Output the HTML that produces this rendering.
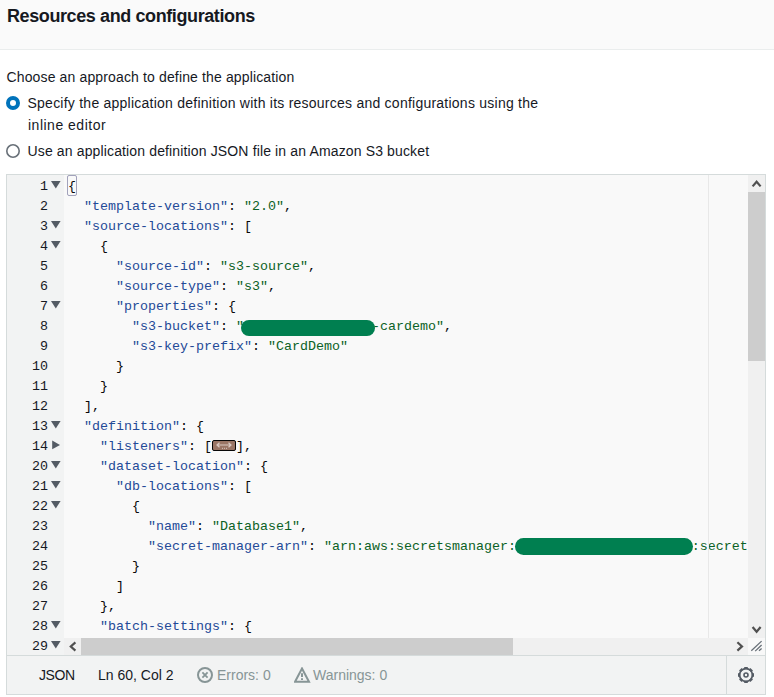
<!DOCTYPE html>
<html><head><meta charset="utf-8">
<style>
html,body{margin:0;padding:0;background:#fff;width:774px;height:697px;overflow:hidden;position:relative}
body{font-family:"Liberation Sans",sans-serif;color:#16191f}
.abs{position:absolute;white-space:nowrap}
#hdr{position:absolute;left:0;top:0;width:774px;height:49px;background:#fafafa;border-bottom:1px solid #eaeded}
#title{left:7px;top:6px;font-size:18px;line-height:20px;font-weight:bold;letter-spacing:-0.4px}
.t14{font-size:14px;line-height:20px}
.radio{position:absolute;width:14px;height:14px;border-radius:50%;box-sizing:border-box}
#r1{left:6px;top:96px;border:4px solid #0073bb;background:#fff}
#r2{left:6px;top:144px;border:2px solid #687078;background:#fff}
#ed{position:absolute;left:6px;top:174px;width:758px;height:519px;border:1px solid #d5dbdb;background:#f2f3f3;overflow:hidden}
#gut{position:absolute;left:0;top:0;width:57px;height:480px;background:#f2f3f3}
#code{position:absolute;left:57px;top:0;width:684px;height:463px;background:#f9f9f9;overflow:hidden}
.gr{position:absolute;left:0;width:57px;height:20px}
.ln{position:absolute;left:0;top:2px;width:41px;text-align:right;font-family:"Liberation Mono",monospace;font-size:13.33px;line-height:20px;color:#16191f}
.cl{position:absolute;left:4px;margin-top:2px;font-family:"Liberation Mono",monospace;font-size:13.33px;line-height:20px;color:#080808;white-space:pre}
.k{color:#234a97}.s{color:#0b6125}
.fa{position:absolute;left:44px;top:0}
#brk{position:absolute;left:3px;top:0;width:10px;height:21px;box-sizing:border-box;border:1px solid rgba(75,75,126,0.5);border-radius:2px}
.fold{display:inline-block;width:24px;height:11px;vertical-align:middle;margin-top:-2px}
.blob{position:absolute;background:#007f50;border-radius:9px}
#b1{left:177px;top:145px;width:134px;height:16px}
#b2{left:451px;top:363px;width:178px;height:17px}
#pm{position:absolute;left:644px;top:0;width:1px;height:463px;background:#e8e8e8}
#vs{position:absolute;left:741px;top:0;width:17px;height:463px;background:#f0f0f0}
#vthumb{position:absolute;left:0;top:17px;width:17px;height:169px;background:#cdcdcd}
#hs{position:absolute;left:57px;top:463px;width:684px;height:17px;background:#f0f0f0}
#hthumb{position:absolute;left:17px;top:0;width:432px;height:17px;background:#cdcdcd}
#corner{position:absolute;left:741px;top:463px;width:17px;height:17px;background:#f8f8f8}
#sb{position:absolute;left:0;top:480px;width:758px;height:39px;border-top:1px solid #d5dbdb;background:#f2f3f3;box-sizing:border-box}
.sbt{position:absolute;top:9px;font-size:14px;line-height:20px;white-space:nowrap;color:#16191f}
.gray{color:#879596}
#div{position:absolute;left:719px;top:0;width:1px;height:38px;background:#d5dbdb}
svg{display:block}
</style></head>
<body>
<div id="hdr"></div>
<div class="abs" id="title">Resources and configurations</div>
<div class="abs t14" style="left:6.5px;top:67px;letter-spacing:0.14px">Choose an approach to define the application</div>
<div class="radio" id="r1"></div>
<div class="abs t14" style="left:27.5px;top:93px;letter-spacing:0.24px">Specify the application definition with its resources and configurations using the</div>
<div class="abs t14" style="left:28px;top:115px;letter-spacing:0.5px">inline editor</div>
<svg style="position:absolute;left:6px;top:144px" width="14" height="14"><circle cx="7" cy="7" r="6.2" fill="#fff" stroke="#687078" stroke-width="1.6"/></svg>
<div class="abs t14" style="left:27.5px;top:141px;letter-spacing:0.14px">Use an application definition JSON file in an Amazon S3 bucket</div>

<div id="ed">
  <div id="gut"><div class="gr" style="top:0px"><span class="ln">1</span><svg class="fa" width="10" height="20" viewBox="0 0 10 20"><path d="M0 6 L9.6 6 L4.8 13.6 Z" fill="#545b64"/></svg></div><div class="gr" style="top:20px"><span class="ln">2</span></div><div class="gr" style="top:40px"><span class="ln">3</span><svg class="fa" width="10" height="20" viewBox="0 0 10 20"><path d="M0 6 L9.6 6 L4.8 13.6 Z" fill="#545b64"/></svg></div><div class="gr" style="top:60px"><span class="ln">4</span><svg class="fa" width="10" height="20" viewBox="0 0 10 20"><path d="M0 6 L9.6 6 L4.8 13.6 Z" fill="#545b64"/></svg></div><div class="gr" style="top:80px"><span class="ln">5</span></div><div class="gr" style="top:100px"><span class="ln">6</span></div><div class="gr" style="top:120px"><span class="ln">7</span><svg class="fa" width="10" height="20" viewBox="0 0 10 20"><path d="M0 6 L9.6 6 L4.8 13.6 Z" fill="#545b64"/></svg></div><div class="gr" style="top:140px"><span class="ln">8</span></div><div class="gr" style="top:160px"><span class="ln">9</span></div><div class="gr" style="top:180px"><span class="ln">10</span></div><div class="gr" style="top:200px"><span class="ln">11</span></div><div class="gr" style="top:220px"><span class="ln">12</span></div><div class="gr" style="top:240px"><span class="ln">13</span><svg class="fa" width="10" height="20" viewBox="0 0 10 20"><path d="M0 6 L9.6 6 L4.8 13.6 Z" fill="#545b64"/></svg></div><div class="gr" style="top:260px"><span class="ln">14</span><svg class="fa" width="10" height="20" viewBox="0 0 10 20"><path d="M1.2 5.5 L1.2 14.3 L9 9.9 Z" fill="#545b64"/></svg></div><div class="gr" style="top:280px"><span class="ln">20</span><svg class="fa" width="10" height="20" viewBox="0 0 10 20"><path d="M0 6 L9.6 6 L4.8 13.6 Z" fill="#545b64"/></svg></div><div class="gr" style="top:300px"><span class="ln">21</span><svg class="fa" width="10" height="20" viewBox="0 0 10 20"><path d="M0 6 L9.6 6 L4.8 13.6 Z" fill="#545b64"/></svg></div><div class="gr" style="top:320px"><span class="ln">22</span><svg class="fa" width="10" height="20" viewBox="0 0 10 20"><path d="M0 6 L9.6 6 L4.8 13.6 Z" fill="#545b64"/></svg></div><div class="gr" style="top:340px"><span class="ln">23</span></div><div class="gr" style="top:360px"><span class="ln">24</span></div><div class="gr" style="top:380px"><span class="ln">25</span></div><div class="gr" style="top:400px"><span class="ln">26</span></div><div class="gr" style="top:420px"><span class="ln">27</span></div><div class="gr" style="top:440px"><span class="ln">28</span><svg class="fa" width="10" height="20" viewBox="0 0 10 20"><path d="M0 6 L9.6 6 L4.8 13.6 Z" fill="#545b64"/></svg></div><div class="gr" style="top:460px"><span class="ln">29</span><svg class="fa" width="10" height="20" viewBox="0 0 10 20"><path d="M0 6 L9.6 6 L4.8 13.6 Z" fill="#545b64"/></svg></div></div>
  <div id="code"><div class="cl" style="top:0px">{</div><div class="cl" style="top:20px">  <span class="k">"template-version"</span>: <span class="s">"2.0"</span>,</div><div class="cl" style="top:40px">  <span class="k">"source-locations"</span>: [</div><div class="cl" style="top:60px">    {</div><div class="cl" style="top:80px">      <span class="k">"source-id"</span>: <span class="s">"s3-source"</span>,</div><div class="cl" style="top:100px">      <span class="k">"source-type"</span>: <span class="s">"s3"</span>,</div><div class="cl" style="top:120px">      <span class="k">"properties"</span>: {</div><div class="cl" style="top:140px">        <span class="k">"s3-bucket"</span>: <span class="s">"                -cardemo"</span>,</div><div class="cl" style="top:160px">        <span class="k">"s3-key-prefix"</span>: <span class="s">"CardDemo"</span></div><div class="cl" style="top:180px">      }</div><div class="cl" style="top:200px">    }</div><div class="cl" style="top:220px">  ],</div><div class="cl" style="top:240px">  <span class="k">"definition"</span>: {</div><div class="cl" style="top:260px">    <span class="k">"listeners"</span>: [<svg class="fold" width="24" height="11" viewBox="0 0 24 11"><rect x="0.5" y="0.5" width="23" height="10" rx="1.5" fill="#9a7565" stroke="#080808"/><path d="M5 5 L19 5 M7.5 2.8 L5 5 L7.5 7.2 M16.5 2.8 L19 5 L16.5 7.2" fill="none" stroke="#d9c9c2" stroke-width="1.2"/><path d="M10 8.3h1M12 8.3h1M14 8.3h1" stroke="#d9c9c2" stroke-width="1"/></svg>],</div><div class="cl" style="top:280px">    <span class="k">"dataset-location"</span>: {</div><div class="cl" style="top:300px">      <span class="k">"db-locations"</span>: [</div><div class="cl" style="top:320px">        {</div><div class="cl" style="top:340px">          <span class="k">"name"</span>: <span class="s">"Database1"</span>,</div><div class="cl" style="top:360px">          <span class="k">"secret-manager-arn"</span>: <span class="s">"arn:aws:secretsmanager:                      :secret:mainframe-cardemo-db"</span></div><div class="cl" style="top:380px">        }</div><div class="cl" style="top:400px">      ]</div><div class="cl" style="top:420px">    },</div><div class="cl" style="top:440px">    <span class="k">"batch-settings"</span>: {</div><div class="cl" style="top:460px">      <span class="k">"type"</span>: <span class="s">"s3"</span>,</div><div id="pm"></div><div id="brk"></div><div class="blob" id="b1"></div><div class="blob" id="b2"></div></div>
  <div id="vs"><div id="vthumb"></div>
    <svg style="position:absolute;left:0;top:0" width="17" height="17"><path d="M4.6 11.4 L8.6 6.8 L12.6 11.4" fill="none" stroke="#505050" stroke-width="2.2"/></svg>
    <svg style="position:absolute;left:0;top:446px" width="17" height="17"><path d="M4.6 6 L8.6 10.8 L12.6 6" fill="none" stroke="#505050" stroke-width="2.2"/></svg>
  </div>
  <div id="hs"><div id="hthumb"></div>
    <svg style="position:absolute;left:0;top:0" width="17" height="17"><path d="M11.4 4.4 L6.8 8.5 L11.4 12.6" fill="none" stroke="#505050" stroke-width="2.2"/></svg>
    <svg style="position:absolute;left:666px;top:0" width="17" height="17"><path d="M7.4 4.2 L12 8.4 L7.4 12.6" fill="none" stroke="#505050" stroke-width="2.2"/></svg>
  </div>
  <div id="corner"><svg width="17" height="17"><path d="M3.3 12.8 L13.6 3.1 M7.2 13.1 L13.6 7 M11 12.8 L13.6 10.5" fill="none" stroke="#687078" stroke-width="1.3"/></svg></div>
  <div id="sb">
    <div class="sbt" style="left:32px;letter-spacing:-0.4px">JSON</div>
    <div class="sbt" style="left:91px">Ln 60, Col 2</div>
    <svg style="position:absolute;left:190px;top:11px" width="17" height="17"><circle cx="8" cy="8" r="7" fill="none" stroke="#879596" stroke-width="2"/><path d="M5.4 5.4 L10.6 10.6 M10.6 5.4 L5.4 10.6" stroke="#879596" stroke-width="1.8"/></svg>
    <div class="sbt gray" style="left:210px">Errors: 0</div>
    <svg style="position:absolute;left:287px;top:11px" width="17" height="17"><path d="M8 1.5 L15 14.8 L1 14.8 Z" fill="none" stroke="#879596" stroke-width="2" stroke-linejoin="miter"/><path d="M8 6.3 L8 10 M8 11.3 L8 13" stroke="#879596" stroke-width="2"/></svg>
    <div class="sbt gray" style="left:306px">Warnings: 0</div>
    <div id="div"></div>
    <svg style="position:absolute;left:731px;top:11px" width="16" height="16" viewBox="0 0 16 16"><circle cx="8" cy="8" r="6.4" fill="none" stroke="#545b64" stroke-width="1.7"/><rect x="6.2" y="0" width="3.6" height="2.2" transform="rotate(0 8 8)" fill="#545b64"/><rect x="6.2" y="0" width="3.6" height="2.2" transform="rotate(45 8 8)" fill="#545b64"/><rect x="6.2" y="0" width="3.6" height="2.2" transform="rotate(90 8 8)" fill="#545b64"/><rect x="6.2" y="0" width="3.6" height="2.2" transform="rotate(135 8 8)" fill="#545b64"/><rect x="6.2" y="0" width="3.6" height="2.2" transform="rotate(180 8 8)" fill="#545b64"/><rect x="6.2" y="0" width="3.6" height="2.2" transform="rotate(225 8 8)" fill="#545b64"/><rect x="6.2" y="0" width="3.6" height="2.2" transform="rotate(270 8 8)" fill="#545b64"/><rect x="6.2" y="0" width="3.6" height="2.2" transform="rotate(315 8 8)" fill="#545b64"/><circle cx="8" cy="8" r="2" fill="none" stroke="#545b64" stroke-width="1.6"/></svg>
  </div>
</div>
</body></html>
